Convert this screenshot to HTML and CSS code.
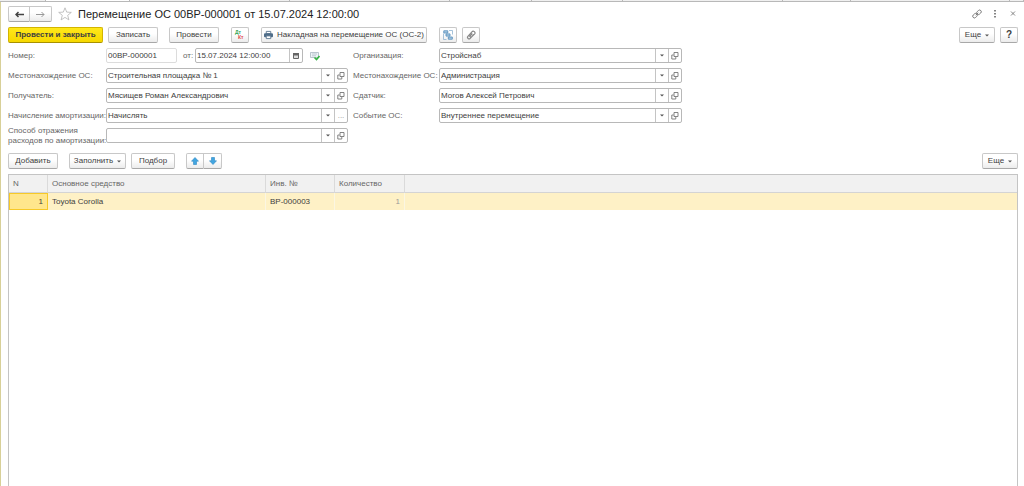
FILE: index.html
```html
<!DOCTYPE html>
<html lang="ru">
<head>
<meta charset="utf-8">
<title>Перемещение ОС 00ВР-000001 от 15.07.2024 12:00:00</title>
<link rel="stylesheet" href="styles.css">
</head>
<body>
<svg class="sprite" aria-hidden="true">
  <symbol id="open" viewBox="0 0 8 8"><path d="M3 .5h4v4H3zM2.500 3H.8v4h4V5" fill="none" stroke="#777" stroke-width=".9"/></symbol>
  <symbol id="caret" viewBox="0 0 4 3"><path d="M0 .5h4L2 2.500z" fill="#555"/></symbol>
</svg>
<div class="tabs"><i></i><i class="active"></i><i></i><i></i><i></i><i></i><i></i><i></i><i></i><i></i></div>
<main class="form">
  <header class="head">
    <div class="group">
      <button class="btn nav" aria-label="Назад"><svg width="9" height="7" viewBox="0 0 9 7"><path d="M.8 3.500H9M3.500 1 1 3.500 3.500 6" fill="none" stroke="#444" stroke-width="1.500"/></svg></button>
      <button class="btn nav" aria-label="Вперед"><svg width="9" height="7" viewBox="0 0 9 7"><path d="M0 3.500h8M5.500 1 8 3.500 5.500 6" fill="none" stroke="#999"/></svg></button>
    </div>
    <button class="plain star" aria-label="В избранное"><svg width="14" height="14" viewBox="0 0 14 14"><path d="m7 .8 1.700 4.300 4.600.3-3.600 2.900 1.200 4.600L7 10.400l-3.900 2.500 1.200-4.600L.7 5.400l4.600-.3z" fill="#fff" stroke="#b4b4b4" stroke-width=".8"/></svg></button>
    <h1>Перемещение ОС 00ВР-000001 от 15.07.2024 12:00:00</h1>
    <div class="wintools">
      <button class="plain" aria-label="Ссылка"><svg width="10" height="10" viewBox="0 0 10 10"><g fill="none" stroke="#777" stroke-width=".9"><rect x="4.500" y="1.600" width="5" height="3.400" rx="1.700" transform="rotate(-42 7 3.300)"/><rect x=".5" y="5" width="5" height="3.400" rx="1.700" transform="rotate(-42 3 6.700)"/><path d="m3.700 6.200 2.600-2.400"/></g></svg></button>
      <button class="plain" aria-label="Меню"><svg width="10" height="10" viewBox="0 0 10 10"><path d="M4.200 1h1.600v1.600H4.200zm0 3h1.600v1.600H4.200zm0 3h1.600v1.600H4.200z" fill="#666"/></svg></button>
      <button class="plain" aria-label="Закрыть"><svg width="10" height="10" viewBox="0 0 10 10"><path d="m3 2.500 4 4m0-4-4 4" stroke="#777" stroke-width=".9"/></svg></button>
    </div>
  </header>

  <div class="bar commands">
    <button class="btn primary">Провести и закрыть</button>
    <button class="btn save">Записать</button>
    <button class="btn post">Провести</button>
    <button class="btn icon" aria-label="Дт Кт"><svg width="12" height="12" viewBox="0 0 12 12"><g font-family="Liberation Sans" font-size="5" font-weight="700"><text x="1" y="5" fill="#35a552">Дт</text><text x="4" y="10" fill="#e04848">Кт</text></g></svg></button>
    <button class="btn print"><svg width="9" height="10" viewBox="0 0 10 10"><path d="M2.500 1h5v2.500h-5z" fill="#fff" stroke="#5a7690"/><rect y="3" width="10" height="4.500" rx="1.200" fill="#4f6d89"/><path d="M2.500 6h5v3h-5z" fill="#fff" stroke="#5a7690"/></svg>Накладная на перемещение ОС (ОС-2)</button>
    <button class="btn icon" aria-label="Связанные документы"><svg width="10" height="10" viewBox="0 0 10 10"><path d="M.5 3.500v6h3M6 .5h3.500v4" fill="none" stroke="#8fb4d2" stroke-width=".8"/><g fill="#a9cbe4" stroke="#5f93bd" stroke-width=".9"><path d="M.8.8h4v2.200h-4zM3 3.900h4v2.200H3zM5.300 7h4v2.200h-4z"/></g></svg></button>
    <button class="btn icon clip" aria-label="Файлы"><svg width="10" height="10" viewBox="0 0 10 10"><path d="m7.700 4.500-3.500 3.800a1.500 1.500 0 0 1-2.300-2l4-4.500a1.700 1.700 0 0 1 2.600 2.300L5 7.500 3.700 6.300 6.300 3.500" fill="none" stroke="#888" stroke-width="1.200"/></svg></button>
    <span class="grow"></span>
    <button class="btn more">Еще <svg class="caret"><use href="#caret"/></svg></button>
    <button class="btn help" aria-label="Справка">?</button>
  </div>

  <div class="fields">
    <div class="col">
      <div class="row"><label for="num">Номер:</label>
        <input class="box number" id="num" value="00ВР-000001" readonly>
        <label class="from" for="date">от:</label>
        <div class="box date"><input id="date" value="15.07.2024 12:00:00"><button aria-label="Календарь"><svg width="6" height="6" viewBox="0 0 6 6"><path d="M.5 1h5v4.500h-5z" fill="#ddd" stroke="#666"/><path d="M0 0h6v2.500H0z" fill="#666"/></svg></button></div>
        <svg class="state" width="10" height="10" viewBox="0 0 10 10"><path d="M.5 1.500h8v5h-8z" fill="#eef3f7" stroke="#a9b7c2" stroke-width=".8"/><path d="M2 3h5M2 4.800h4" stroke="#a9b7c2" stroke-width=".7"/><path d="m4.500 6.500 2 2L9.500 5" fill="none" stroke="#35b344" stroke-width="1.600"/></svg>
      </div>
      <div class="row"><label for="loc">Местонахождение ОС:</label><div class="box"><input id="loc" value="Строительная площадка № 1"><button aria-label="Выбрать"><svg class="caret"><use href="#caret"/></svg></button><button aria-label="Открыть"><svg class="open"><use href="#open"/></svg></button></div></div>
      <div class="row"><label for="rec">Получатель:</label><div class="box"><input id="rec" value="Мясищев Роман Александрович"><button aria-label="Выбрать"><svg class="caret"><use href="#caret"/></svg></button><button aria-label="Открыть"><svg class="open"><use href="#open"/></svg></button></div></div>
      <div class="row"><label for="amo">Начисление амортизации:</label><div class="box"><input id="amo" value="Начислять"><button aria-label="Выбрать"><svg class="caret"><use href="#caret"/></svg></button><button class="dots" aria-label="Показать все">...</button></div></div>
      <div class="row"><label for="exp">Способ отражения<br>расходов по амортизации:</label><div class="box"><input id="exp" value=""><button aria-label="Выбрать"><svg class="caret"><use href="#caret"/></svg></button><button aria-label="Открыть"><svg class="open"><use href="#open"/></svg></button></div></div>
    </div>
    <div class="col right">
      <div class="row"><label for="org">Организация:</label><div class="box"><input id="org" value="Стройснаб"><button aria-label="Выбрать"><svg class="caret"><use href="#caret"/></svg></button><button aria-label="Открыть"><svg class="open"><use href="#open"/></svg></button></div></div>
      <div class="row"><label for="loc2">Местонахождение ОС:</label><div class="box"><input id="loc2" value="Администрация"><button aria-label="Выбрать"><svg class="caret"><use href="#caret"/></svg></button><button aria-label="Открыть"><svg class="open"><use href="#open"/></svg></button></div></div>
      <div class="row"><label for="giver">Сдатчик:</label><div class="box"><input id="giver" value="Могов Алексей Петрович"><button aria-label="Выбрать"><svg class="caret"><use href="#caret"/></svg></button><button aria-label="Открыть"><svg class="open"><use href="#open"/></svg></button></div></div>
      <div class="row"><label for="event">Событие ОС:</label><div class="box"><input id="event" value="Внутреннее перемещение"><button aria-label="Выбрать"><svg class="caret"><use href="#caret"/></svg></button><button aria-label="Открыть"><svg class="open"><use href="#open"/></svg></button></div></div>
    </div>
  </div>

  <div class="bar rowtools">
    <button class="btn add">Добавить</button>
    <button class="btn fill">Заполнить <svg class="caret"><use href="#caret"/></svg></button>
    <button class="btn pick">Подбор</button>
    <div class="group arrows">
      <button class="btn" aria-label="Вверх"><svg width="8" height="8" viewBox="0 0 8 8"><path d="m4 .5 3.500 3.700h-2v3.300h-3V4.200h-2z" fill="#41a5e0" stroke="#2b86c2" stroke-width=".6"/></svg></button>
      <button class="btn" aria-label="Вниз"><svg width="8" height="8" viewBox="0 0 8 8"><path d="M4 7.500.5 3.800h2V.5h3v3.300h2z" fill="#41a5e0" stroke="#2b86c2" stroke-width=".6"/></svg></button>
    </div>
    <span class="grow"></span>
    <button class="btn more">Еще <svg class="caret"><use href="#caret"/></svg></button>
  </div>

  <div class="grid">
    <table>
      <colgroup><col class="c-n"><col class="c-name"><col class="c-inv"><col class="c-qty"><col></colgroup>
      <thead><tr><th>N</th><th>Основное средство</th><th>Инв. №</th><th>Количество</th><th></th></tr></thead>
      <tbody><tr><td class="num current">1</td><td>Toyota Corolla</td><td>ВР-000003</td><td class="num qty">1</td><td></td></tr></tbody>
    </table>
  </div>
</main>
</body>
</html>
```
FILE: styles.css
```css
* { box-sizing: border-box; }
body {
  margin: 0;
  min-height: 100vh;
  display: flex;
  flex-direction: column;
  background: #fff;
  color: #404040;
  font: 8px/10px "Liberation Sans", Arial, sans-serif;
}
button, input { font: inherit; color: inherit; margin: 0; padding: 0; }
svg { display: block; flex: none; }
.sprite { display: none; }
.caret { width: 4px; height: 3px; }
.open { width: 8px; height: 8px; }

.tabs {
  display: grid;
  grid-template-columns: 46px 84px 160px 160px 82px 91px 160px 68px 159px 1fr;
  height: 2px;
  background: #f0f0f0;
  border-bottom: 1px solid #b8b8b8;
}
.tabs i { border-right: 1px solid #b8b8b8; }
.tabs .active { background: #fff; }

.form {
  flex: 1;
  display: flex;
  flex-direction: column;
  padding: 4px 6px 0 7px;
  border-left: 1px solid #d8d098;
}

.head { display: flex; align-items: center; height: 16px; }
.head h1 { margin: 0 0 0 6px; font-size: 11px; line-height: 16px; font-weight: 400; color: #222; }
.plain { border: 0; background: none; display: grid; place-items: center; }
.star { margin-left: 6px; }
.wintools { display: flex; gap: 8px; margin-left: auto; }

.btn {
  height: 16px;
  display: flex;
  align-items: center;
  justify-content: center;
  gap: 4px;
  border: 1px solid #c8c8c8;
  border-bottom-color: #a8a8a8;
  border-radius: 2px;
  background: linear-gradient(#fff 40%, #ececec);
  white-space: nowrap;
}
.group { display: flex; }
.group .btn { width: 22px; }
.group .btn:first-child { border-radius: 2px 0 0 2px; }
.group .btn:last-child { border-radius: 0 2px 2px 0; border-left: 0; }

.bar { display: flex; align-items: center; }
.grow { flex: 1; }
.commands { margin-top: 5px; }
.primary {
  width: 95px;
  font-weight: 700;
  border-color: #d3b500;
  border-bottom-color: #a89100;
  background: linear-gradient(#ffe81a, #f6d800);
}
.save { width: 50px; margin-left: 5px; }
.post { width: 50px; margin-left: 11px; }
.icon { width: 18px; margin-left: 12px; }
.print { width: 166px; margin-left: 12px; }
.clip { margin-left: 5px; }
.more { width: 36px; }
.help { width: 18px; margin-left: 5px; font-size: 10px; font-weight: 700; }

.fields { display: flex; gap: 5px; margin-top: 5px; }
.col { width: 340px; display: flex; flex-direction: column; gap: 5px; }
.right { width: 329px; }
.row { display: flex; align-items: center; height: 15px; }
.row label { width: 98px; flex: none; color: #666; white-space: nowrap; }
.right label { width: 86px; }
.row .from { width: 18px; padding-left: 6px; }
.box {
  flex: 1;
  min-width: 0;
  height: 15px;
  display: flex;
  border: 1px solid #b8b8b8;
  border-radius: 2px;
  background: #fff;
}
.box input { flex: 1; min-width: 0; border: 0; padding: 0 1px; background: none; outline: 0; }
.box button {
  width: 13px;
  display: grid;
  place-items: center;
  border: 0;
  border-left: 1px solid #c4c4c4;
  background: none;
}
.box .dots { color: #999; }
.number { flex: none; width: 71px; padding: 0 1px; border-color: #dcdcdc; }
.date { flex: none; width: 108px; }
.state { margin-left: 7px; }

.rowtools { margin-top: 10px; }
.add { width: 50px; }
.fill { width: 57px; margin-left: 11px; }
.pick { width: 44px; margin-left: 5px; }
.arrows { margin-left: 11px; }
.arrows .btn { width: 18px; }

.grid {
  flex: 1;
  margin-top: 5px;
  border: 1px solid #c4c4c4;
  border-bottom: 0;
}
table { width: 100%; table-layout: fixed; border-collapse: separate; border-spacing: 0; }
.c-n { width: 39px; }
.c-name { width: 218px; }
.c-inv { width: 69px; }
.c-qty { width: 70px; }
th, td { padding: 0 4px; text-align: left; font-weight: 400; }
th { height: 18px; background: #f1f1f1; color: #666; border-right: 1px solid #dadada; border-bottom: 1px solid #d4d4d4; }
td { height: 17px; background: #fef1c6; border-right: 1px solid #fbf6e2; }
th:last-child, td:last-child { border-right: 0; }
.num { text-align: right; }
.current { background: #ffe68c; border: 1px solid #f7c928; }
.qty { color: #999; }
```
